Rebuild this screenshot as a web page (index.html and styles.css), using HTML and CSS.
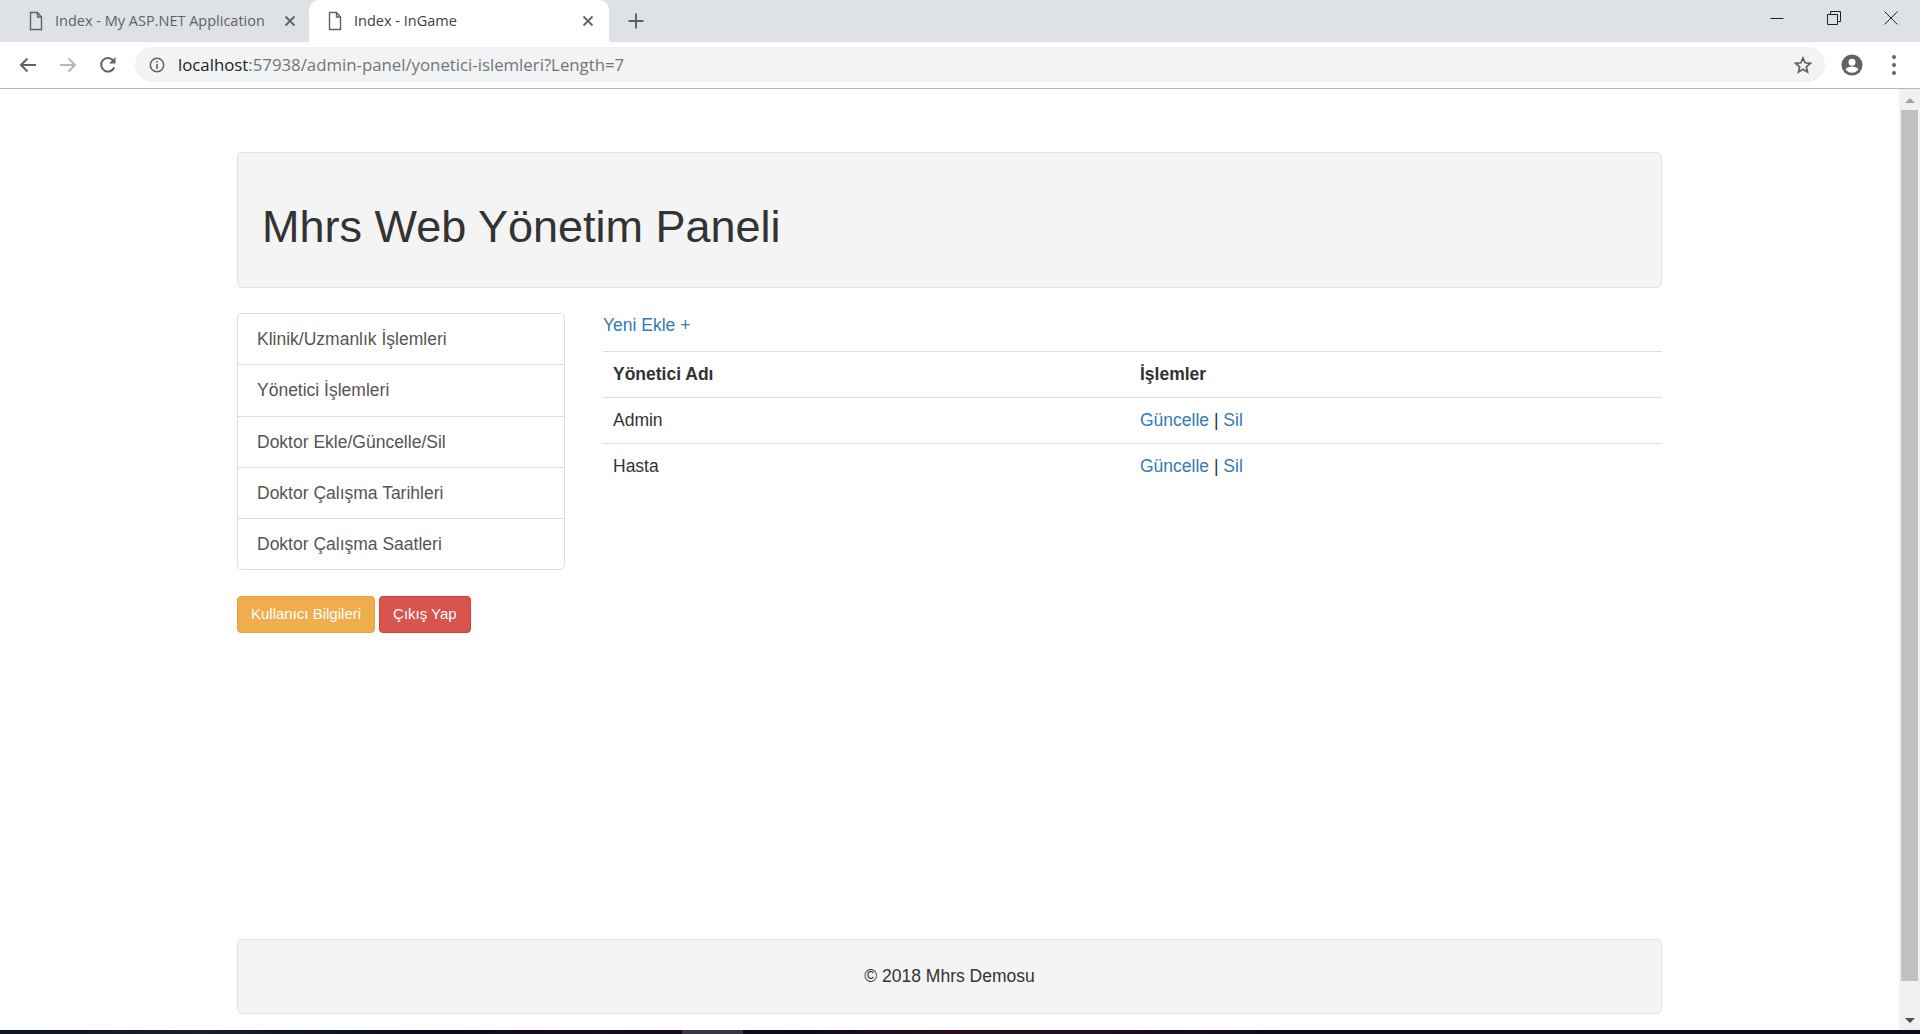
FILE: index.html
```html
<!DOCTYPE html>
<html>

<head>
	<meta charset="utf-8">
	<title>Index - InGame</title>
	<link rel="stylesheet" href="styles.css">
</head>

<body class="body">

	<div class="screen">

		<!-- browser tabs -->
		<div class="tabBar">
			<div class="tab">
				<svg class="tabIcon" width="16" height="20" viewBox="0 0 16 20"><path d="M2.5 1.5h7l4 4.500v12.500h-11z M9.500 1.500v4.500h4" fill="none" stroke="#5f6368" stroke-width="1.400"/></svg>
				<span class="tabTitle">Index - My ASP.NET Application</span>
				<svg class="tabClose" width="12" height="12" viewBox="0 0 12 12"><path d="M1.500 1.500l9 9M10.500 1.500l-9 9" stroke="#5f6368" stroke-width="1.800"/></svg>
			</div>
			<div class="tab tabActive">
				<svg class="tabIcon" width="16" height="20" viewBox="0 0 16 20"><path d="M2.500 1.500h7l4 4.500v12.500h-11z M9.500 1.500v4.500h4" fill="none" stroke="#5f6368" stroke-width="1.400"/></svg>
				<span class="tabTitle">Index - InGame</span>
				<svg class="tabClose" width="12" height="12" viewBox="0 0 12 12"><path d="M1.500 1.500l9 9M10.500 1.500l-9 9" stroke="#5f6368" stroke-width="1.800"/></svg>
			</div>
			<svg class="newTab" width="16" height="16" viewBox="0 0 16 16"><path d="M8 0.500v15M0.500 8h15" stroke="#5f6368" stroke-width="2"/></svg>
			<div class="windowButtons">
				<svg width="14" height="14" viewBox="0 0 14 14"><path d="M0.500 7.500h13" stroke="#222" stroke-width="1"/></svg>
				<svg width="14" height="14" viewBox="0 0 14 14"><path d="M0.500 3.500h10v10h-10z M3.500 3.500v-3h10v10h-3" fill="none" stroke="#222" stroke-width="1"/></svg>
				<svg width="14" height="14" viewBox="0 0 14 14"><path d="M0.500 0.500l13 13M13.500 0.500l-13 13" stroke="#222" stroke-width="1"/></svg>
			</div>
		</div>

		<!-- address bar -->
		<div class="toolBar">
			<svg class="navIcon" width="18" height="16" viewBox="0 0 18 16"><path d="M17 8H2M8.500 1.500L2 8l6.500 6.500" fill="none" stroke="#5f6368" stroke-width="2"/></svg>
			<svg class="navIcon" width="18" height="16" viewBox="0 0 18 16"><path d="M1 8h15M9.500 1.500L16 8l-6.500 6.500" fill="none" stroke="#b4b7bb" stroke-width="2"/></svg>
			<svg class="navIcon" width="18" height="18" viewBox="0 0 18 18"><path d="M15.200 11.500A6.800 6.800 0 1 1 14 4.200" fill="none" stroke="#5f6368" stroke-width="2"/><path d="M16.500 1v6.500H10z" fill="#5f6368"/></svg>
			<div class="omnibox">
				<svg class="infoIcon" width="16" height="16" viewBox="0 0 16 16"><circle cx="8" cy="8" r="6.700" fill="none" stroke="#5f6368" stroke-width="1.500"/><path d="M8 7v5M8 4v1.600" stroke="#5f6368" stroke-width="1.600"/></svg>
				<span class="url"><span class="urlHost">localhost</span>:57938/admin-panel/yonetici-islemleri?Length=7</span>
				<svg class="starIcon" width="18" height="18" viewBox="0 0 18 18"><path d="M9 2l2.100 4.800 5.200 0.500-3.900 3.500 1.100 5.100L9 13.200l-4.500 2.700 1.100-5.100-3.900-3.500 5.200-0.500z" fill="none" stroke="#5f6368" stroke-width="1.700"/></svg>
			</div>
			<svg class="avatarIcon" width="22" height="22" viewBox="0 0 22 22"><circle cx="11" cy="11" r="10.500" fill="#5f6368"/><circle cx="11" cy="8.300" r="3.500" fill="#fff"/><path d="M4.500 15.500c1.500-2.300 4-3 6.500-3s5 .7 6.500 3c-1.500 2-3.800 3.300-6.500 3.300s-5-1.300-6.500-3.300z" fill="#fff"/></svg>
			<div class="menuDots"><span></span><span></span><span></span></div>
		</div>

		<div class="viewport">

			<div class="page">

				<div class="jumbotron">
					<h1 class="pageTitle">Mhrs Web Yönetim Paneli</h1>
				</div>

				<div class="pageRow">

					<div class="sidebar">
						<div class="listGroup">
							<a class="listItem" href="#">Klinik/Uzmanlık İşlemleri</a>
							<a class="listItem" href="#">Yönetici İşlemleri</a>
							<a class="listItem" href="#">Doktor Ekle/Güncelle/Sil</a>
							<a class="listItem" href="#">Doktor Çalışma Tarihleri</a>
							<a class="listItem" href="#">Doktor Çalışma Saatleri</a>
						</div>
						<div class="sideButtons">
							<a class="btn btnWarning" href="#">Kullanıcı Bilgileri</a>
							<a class="btn btnDanger" href="#">Çıkış Yap</a>
						</div>
					</div>

					<div class="content">
						<a class="addLink" href="#">Yeni Ekle +</a>
						<table class="table">
							<tr>
								<th>Yönetici Adı</th>
								<th>İşlemler</th>
							</tr>
							<tr>
								<td>Admin</td>
								<td><a href="#">Güncelle</a> | <a href="#">Sil</a></td>
							</tr>
							<tr>
								<td>Hasta</td>
								<td><a href="#">Güncelle</a> | <a href="#">Sil</a></td>
							</tr>
						</table>
					</div>

				</div>

				<div class="footer">© 2018 Mhrs Demosu</div>

			</div>

			<div class="scrollBar">
				<span class="arrowUp"></span>
				<div class="scrollThumb"></div>
				<span class="arrowDown"></span>
			</div>

		</div>

		<div class="taskBar"><div class="taskItem"></div></div>

	</div>

</body>

</html>
```

FILE: styles.css
```css
.body {
	margin: 0;
	background-color: #FFFFFF;
	overflow: hidden;
}

.screen {
	width: 1920px;
	height: 1034px;
	display: flex;
	flex-direction: column;
}

/* tabs */

.tabBar {
	height: 42px;
	background-color: #DEE1E6;
	display: flex;
	align-items: center;
	flex-shrink: 0;
}

.tab {
	box-sizing: border-box;
	width: 300px;
	height: 42px;
	padding-left: 27px;
	padding-right: 5px;
	margin-left: 1px;
	display: flex;
	align-items: center;
	font: 14.500px "Open Sans", sans-serif;
	color: #5F6368;
}

.tab + .tab {
	margin-left: 8px;
}

.tabActive {
	background-color: #FFFFFF;
	border-radius: 10px 10px 0 0;
	padding-left: 18px;
	padding-right: 15px;
	color: #3C4043;
}

.tabIcon {
	margin-right: 11px;
}

.tabTitle {
	flex-grow: 1;
	white-space: nowrap;
	padding-bottom: 2px;
}

.newTab {
	margin-left: 19px;
}

.windowButtons {
	margin-left: auto;
	padding-right: 22px;
	padding-bottom: 6px;
	display: flex;
	gap: 43px;
}

/* address bar */

.toolBar {
	box-sizing: border-box;
	height: 47px;
	background-color: #FFFFFF;
	border-bottom: 1px solid #B8B8B8;
	display: flex;
	align-items: center;
	padding-left: 19px;
	padding-bottom: 1px;
	flex-shrink: 0;
}

.navIcon {
	margin-right: 22px;
}

.omnibox {
	box-sizing: border-box;
	width: 1690px;
	height: 35px;
	margin-left: -4px;
	background-color: #F1F3F4;
	border-radius: 18px;
	display: flex;
	align-items: center;
	padding-left: 14px;
	padding-right: 13px;
}

.infoIcon {
	margin-right: 13px;
}

.url {
	flex-grow: 1;
	font: 16.800px "Open Sans", sans-serif;
	color: #70757A;
}

.urlHost {
	color: #202124;
}

.avatarIcon {
	margin-left: 16px;
}

.menuDots {
	margin-left: 29px;
	display: flex;
	flex-direction: column;
	gap: 4px;
}

.menuDots span {
	width: 4px;
	height: 4px;
	border-radius: 50%;
	background-color: #5F6368;
}

/* page */

.viewport {
	flex-grow: 1;
	display: flex;
	min-height: 0;
}

.page {
	box-sizing: border-box;
	width: 1899px;
	padding: 63px 237px 16px 237px;
	display: flex;
	flex-direction: column;
	font: 17.500px "Liberation Sans", Arial, sans-serif;
	color: #333333;
}

.jumbotron {
	box-sizing: border-box;
	height: 136px;
	background-color: #F4F4F4;
	border: 1px solid #E3E3E3;
	border-radius: 5px;
	padding-left: 24px;
	display: flex;
	align-items: center;
}

.pageTitle {
	margin: 0;
	padding-top: 13px;
	font-size: 45px;
	font-weight: normal;
}

.pageRow {
	margin-top: 25px;
	display: flex;
}

.sidebar {
	width: 328px;
	flex-shrink: 0;
}

.listGroup {
	border: 1px solid #DDDDDD;
	border-radius: 5px;
}

.listItem {
	display: block;
	height: 50.300px;
	line-height: 50px;
	padding-left: 19px;
	color: #555555;
	text-decoration: none;
	border-top: 1px solid #DDDDDD;
}

.listItem:first-child {
	border-top: none;
}

.sideButtons {
	margin-top: 25.500px;
	display: flex;
	gap: 4px;
}

.btn {
	box-sizing: border-box;
	height: 37px;
	line-height: 34px;
	padding-left: 13px;
	padding-right: 13px;
	border-radius: 4px;
	font-size: 15px;
	color: #FFFFFF;
	text-decoration: none;
}

.btnWarning {
	background-color: #F0AD4E;
	border: 1px solid #EEA236;
}

.btnDanger {
	background-color: #D9534F;
	border: 1px solid #D43F3A;
}

.content {
	margin-left: 38px;
	flex-grow: 1;
}

.addLink {
	display: block;
	height: 38px;
	line-height: 24px;
	color: #337AB7;
	text-decoration: none;
}

.table {
	width: 100%;
	border-collapse: collapse;
	table-layout: fixed;
}

.table th, .table td {
	height: 45px;
	padding: 0 10px;
	text-align: left;
	border-top: 1px solid #DDDDDD;
}

.table th:first-child, .table td:first-child {
	width: 507px;
}

.table a {
	color: #337AB7;
	text-decoration: none;
}

.footer {
	box-sizing: border-box;
	height: 75px;
	margin-top: auto;
	background-color: #F4F4F4;
	border: 1px solid #E3E3E3;
	border-radius: 5px;
	display: flex;
	align-items: center;
	justify-content: center;
}

/* scroll bar */

.scrollBar {
	width: 21px;
	background-color: #F1F1F1;
	display: flex;
	flex-direction: column;
	align-items: center;
}

.scrollThumb {
	width: 17px;
	height: 871px;
	background-color: #C1C1C1;
}

.arrowUp, .arrowDown {
	width: 0;
	height: 0;
	border-left: 5px solid transparent;
	border-right: 5px solid transparent;
}

.arrowUp {
	margin-top: 9px;
	margin-bottom: 7px;
	border-bottom: 5px solid #A3A3A3;
}

.arrowDown {
	margin-top: 37px;
	border-top: 5px solid #505050;
}

/* bottom edge of the desktop */

.taskBar {
	height: 4px;
	flex-shrink: 0;
	background: linear-gradient(to right, #0E1420 0, #14202A 200px, #0C0A20 420px, #180A20 600px, #0E0A1E 800px, #2A0E20 950px, #0E0A1E 1300px, #0E0A1E 1920px);
}

.taskItem {
	width: 61px;
	height: 4px;
	margin-left: 682px;
	background-color: #3A3444;
}
```
